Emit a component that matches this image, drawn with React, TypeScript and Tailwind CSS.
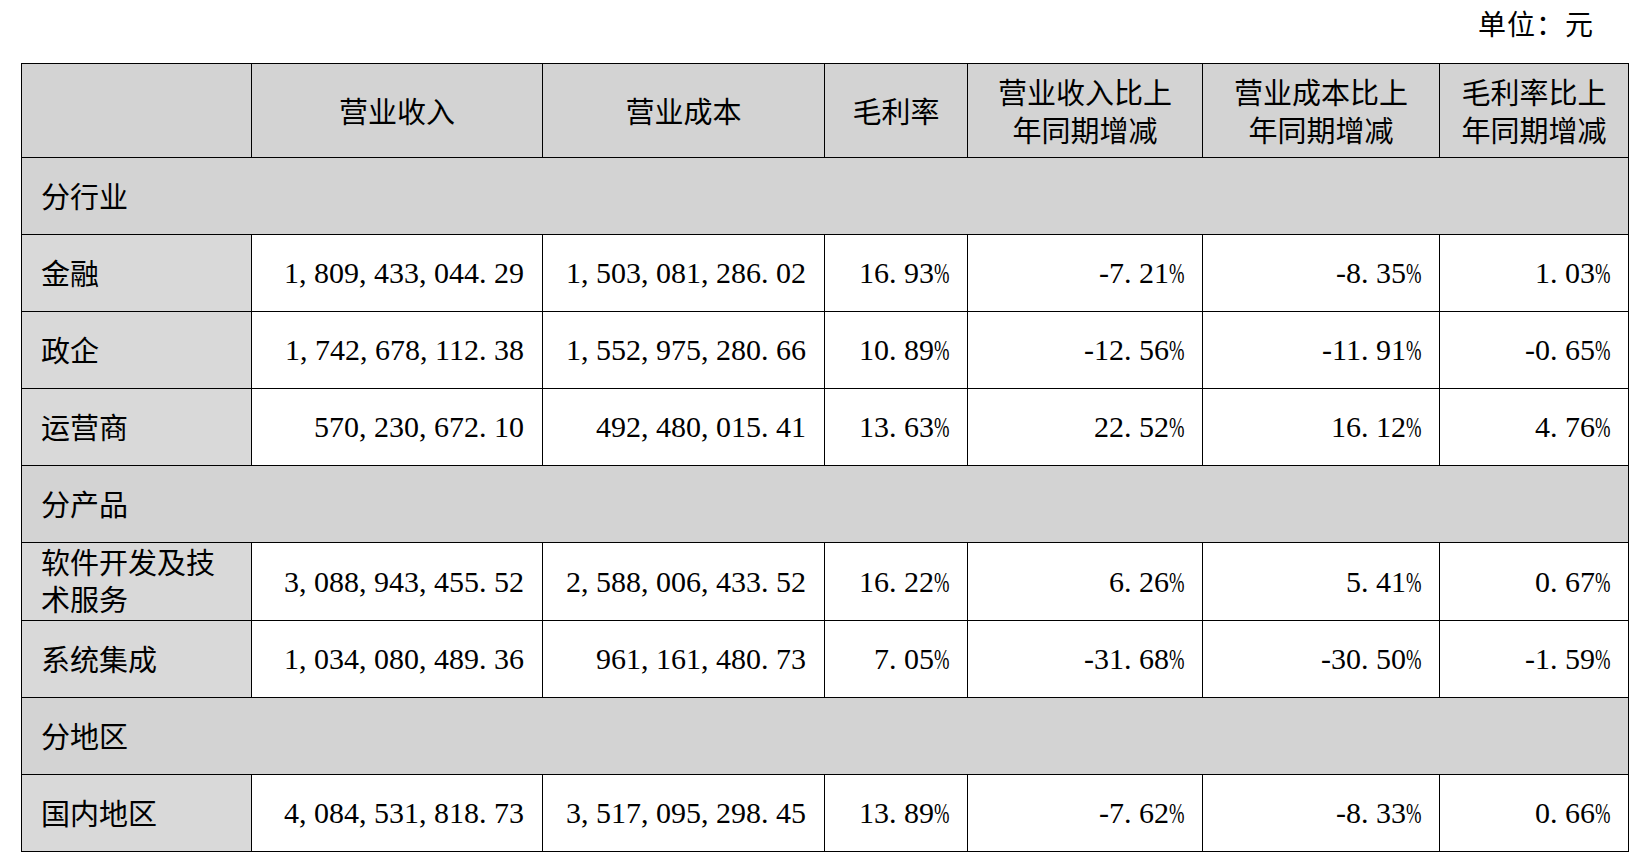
import React from "react";

const FONT = "font-['Liberation_Serif','Noto_Sans_CJK_SC',serif]";

function Num({ v }: { v: string }) {
  const parts: React.ReactNode[] = [];
  v.split("").forEach((ch, i) => {
    if (ch === "," || ch === ".") {
      parts.push(
        <span key={i} className="inline-block w-[0.5em] text-left">
          {ch}
        </span>
      );
    } else if (ch === "-") {
      parts.push(
        <span key={i} className="inline-block w-[0.5em] text-right">
          -
        </span>
      );
    } else if (ch === "%") {
      parts.push(
        <span key={i} className="inline-block w-[0.5em] overflow-visible">
          <span className="inline-block origin-left scale-x-[0.62]">%</span>
        </span>
      );
    } else {
      parts.push(<span key={i}>{ch}</span>);
    }
  });
  return <span className="whitespace-nowrap text-[30px]">{parts}</span>;
}

type Row =
  | { kind: "section"; label: string }
  | { kind: "data"; label: React.ReactNode; vals: string[]; tall?: boolean };

const rows: Row[] = [
  { kind: "section", label: "分行业" },
  { kind: "data", label: "金融", vals: ["1,809,433,044.29", "1,503,081,286.02", "16.93%", "-7.21%", "-8.35%", "1.03%"] },
  { kind: "data", label: "政企", vals: ["1,742,678,112.38", "1,552,975,280.66", "10.89%", "-12.56%", "-11.91%", "-0.65%"] },
  { kind: "data", label: "运营商", vals: ["570,230,672.10", "492,480,015.41", "13.63%", "22.52%", "16.12%", "4.76%"] },
  { kind: "section", label: "分产品" },
  {
    kind: "data",
    label: (
      <>
        软件开发及技
        <br />
        术服务
      </>
    ),
    vals: ["3,088,943,455.52", "2,588,006,433.52", "16.22%", "6.26%", "5.41%", "0.67%"],
    tall: true,
  },
  { kind: "data", label: "系统集成", vals: ["1,034,080,489.36", "961,161,480.73", "7.05%", "-31.68%", "-30.50%", "-1.59%"] },
  { kind: "section", label: "分地区" },
  { kind: "data", label: "国内地区", vals: ["4,084,531,818.73", "3,517,095,298.45", "13.89%", "-7.62%", "-8.33%", "0.66%"] },
];

const headers: React.ReactNode[] = [
  "",
  "营业收入",
  "营业成本",
  "毛利率",
  <>
    营业收入比上
    <br />
    年同期增减
  </>,
  <>
    营业成本比上
    <br />
    年同期增减
  </>,
  <>
    毛利率比上
    <br />
    年同期增减
  </>,
];

export default function App() {
  return (
    <div className={`${FONT} w-[1649px] h-[855px] bg-white text-black text-[29px] px-[21px] overflow-hidden`}>
      <div className="h-[63px] flex items-start justify-end pr-[34px] pt-[4px] leading-[44px] text-[28px] tracking-[1px]">
        单位：元
      </div>
      <table className="w-[1607px] table-fixed border-collapse">
        <colgroup>
          <col className="w-[230px]" />
          <col className="w-[291px]" />
          <col className="w-[282px]" />
          <col className="w-[143px]" />
          <col className="w-[235px]" />
          <col className="w-[237px]" />
          <col className="w-[189px]" />
        </colgroup>
        <thead>
          <tr className="h-[94px]">
            {headers.map((h, i) => (
              <th
                key={i}
                className="border border-black bg-[#d3d3d3] text-center align-middle font-normal leading-[38px] pt-[5px]"
              >
                {h}
              </th>
            ))}
          </tr>
        </thead>
        <tbody>
          {rows.map((r, ri) =>
            r.kind === "section" ? (
              <tr key={ri} className="h-[77px]">
                <td colSpan={7} className="border border-black bg-[#d3d3d3] pl-[19px] pt-[4px] pb-0 align-middle leading-[38px]">
                  {r.label}
                </td>
              </tr>
            ) : (
              <tr key={ri} className={r.tall ? "h-[78px]" : "h-[77px]"}>
                <td
                  className={`border border-black bg-[#d9d9d9] pl-[19px] pr-[4px] pb-0 align-middle ${
                    r.tall ? "pt-[2px] leading-[37px]" : "pt-[4px] leading-[38px]"
                  }`}
                >
                  {r.label}
                </td>
                {r.vals.map((v, vi) => (
                  <td key={vi} className="border border-black bg-white text-right pr-[18px] py-0 align-middle leading-[38px]">
                    <Num v={v} />
                  </td>
                ))}
              </tr>
            )
          )}
        </tbody>
      </table>
    </div>
  );
}
